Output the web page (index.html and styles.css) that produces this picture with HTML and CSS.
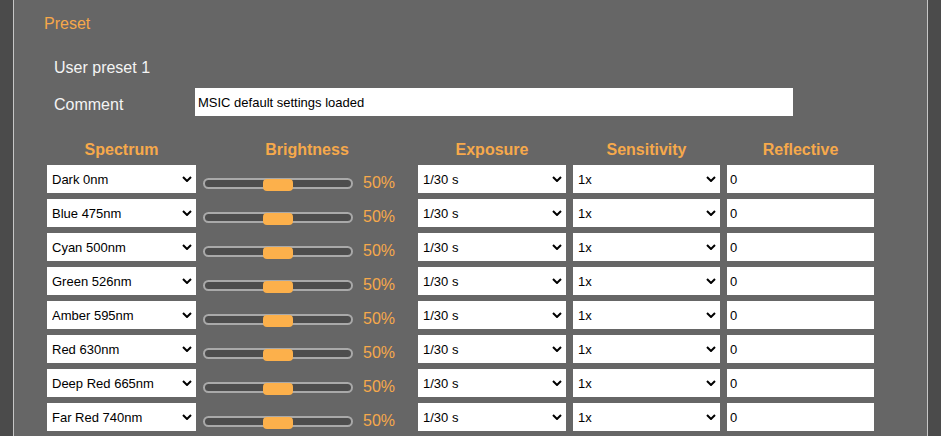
FILE: index.html
```html
<!DOCTYPE html>
<html>
<head>
<meta charset="utf-8">
<link rel="stylesheet" href="styles.css">
</head>
<body>
<div class="panel">
  <h2 class="title">Preset</h2>
  <div class="preset-name">User preset 1</div>
  <div class="comment-row">
    <label class="comment-label">Comment</label>
    <input class="comment-input" type="text" value="MSIC default settings loaded">
  </div>
  <div class="grid">
    <div class="head">Spectrum</div>
    <div class="head">Brightness</div>
    <div class="head">Exposure</div>
    <div class="head">Sensitivity</div>
    <div class="head">Reflective</div>

    <div class="sel"><select><option>Dark 0nm</option></select><svg class="chev" viewBox="0 0 10 6"><polyline points="1,1 5,5 9,1" fill="none" stroke="#000" stroke-width="2"/></svg></div>
    <div class="bright"><div class="slider"><div class="thumb"></div></div><span class="pct">50%</span></div>
    <div class="sel"><select><option>1/30 s</option></select><svg class="chev" viewBox="0 0 10 6"><polyline points="1,1 5,5 9,1" fill="none" stroke="#000" stroke-width="2"/></svg></div>
    <div class="sel"><select><option>1x</option></select><svg class="chev" viewBox="0 0 10 6"><polyline points="1,1 5,5 9,1" fill="none" stroke="#000" stroke-width="2"/></svg></div>
    <input class="num" type="text" value="0">

    <div class="sel"><select><option>Blue 475nm</option></select><svg class="chev" viewBox="0 0 10 6"><polyline points="1,1 5,5 9,1" fill="none" stroke="#000" stroke-width="2"/></svg></div>
    <div class="bright"><div class="slider"><div class="thumb"></div></div><span class="pct">50%</span></div>
    <div class="sel"><select><option>1/30 s</option></select><svg class="chev" viewBox="0 0 10 6"><polyline points="1,1 5,5 9,1" fill="none" stroke="#000" stroke-width="2"/></svg></div>
    <div class="sel"><select><option>1x</option></select><svg class="chev" viewBox="0 0 10 6"><polyline points="1,1 5,5 9,1" fill="none" stroke="#000" stroke-width="2"/></svg></div>
    <input class="num" type="text" value="0">

    <div class="sel"><select><option>Cyan 500nm</option></select><svg class="chev" viewBox="0 0 10 6"><polyline points="1,1 5,5 9,1" fill="none" stroke="#000" stroke-width="2"/></svg></div>
    <div class="bright"><div class="slider"><div class="thumb"></div></div><span class="pct">50%</span></div>
    <div class="sel"><select><option>1/30 s</option></select><svg class="chev" viewBox="0 0 10 6"><polyline points="1,1 5,5 9,1" fill="none" stroke="#000" stroke-width="2"/></svg></div>
    <div class="sel"><select><option>1x</option></select><svg class="chev" viewBox="0 0 10 6"><polyline points="1,1 5,5 9,1" fill="none" stroke="#000" stroke-width="2"/></svg></div>
    <input class="num" type="text" value="0">

    <div class="sel"><select><option>Green 526nm</option></select><svg class="chev" viewBox="0 0 10 6"><polyline points="1,1 5,5 9,1" fill="none" stroke="#000" stroke-width="2"/></svg></div>
    <div class="bright"><div class="slider"><div class="thumb"></div></div><span class="pct">50%</span></div>
    <div class="sel"><select><option>1/30 s</option></select><svg class="chev" viewBox="0 0 10 6"><polyline points="1,1 5,5 9,1" fill="none" stroke="#000" stroke-width="2"/></svg></div>
    <div class="sel"><select><option>1x</option></select><svg class="chev" viewBox="0 0 10 6"><polyline points="1,1 5,5 9,1" fill="none" stroke="#000" stroke-width="2"/></svg></div>
    <input class="num" type="text" value="0">

    <div class="sel"><select><option>Amber 595nm</option></select><svg class="chev" viewBox="0 0 10 6"><polyline points="1,1 5,5 9,1" fill="none" stroke="#000" stroke-width="2"/></svg></div>
    <div class="bright"><div class="slider"><div class="thumb"></div></div><span class="pct">50%</span></div>
    <div class="sel"><select><option>1/30 s</option></select><svg class="chev" viewBox="0 0 10 6"><polyline points="1,1 5,5 9,1" fill="none" stroke="#000" stroke-width="2"/></svg></div>
    <div class="sel"><select><option>1x</option></select><svg class="chev" viewBox="0 0 10 6"><polyline points="1,1 5,5 9,1" fill="none" stroke="#000" stroke-width="2"/></svg></div>
    <input class="num" type="text" value="0">

    <div class="sel"><select><option>Red 630nm</option></select><svg class="chev" viewBox="0 0 10 6"><polyline points="1,1 5,5 9,1" fill="none" stroke="#000" stroke-width="2"/></svg></div>
    <div class="bright"><div class="slider"><div class="thumb"></div></div><span class="pct">50%</span></div>
    <div class="sel"><select><option>1/30 s</option></select><svg class="chev" viewBox="0 0 10 6"><polyline points="1,1 5,5 9,1" fill="none" stroke="#000" stroke-width="2"/></svg></div>
    <div class="sel"><select><option>1x</option></select><svg class="chev" viewBox="0 0 10 6"><polyline points="1,1 5,5 9,1" fill="none" stroke="#000" stroke-width="2"/></svg></div>
    <input class="num" type="text" value="0">

    <div class="sel"><select><option>Deep Red 665nm</option></select><svg class="chev" viewBox="0 0 10 6"><polyline points="1,1 5,5 9,1" fill="none" stroke="#000" stroke-width="2"/></svg></div>
    <div class="bright"><div class="slider"><div class="thumb"></div></div><span class="pct">50%</span></div>
    <div class="sel"><select><option>1/30 s</option></select><svg class="chev" viewBox="0 0 10 6"><polyline points="1,1 5,5 9,1" fill="none" stroke="#000" stroke-width="2"/></svg></div>
    <div class="sel"><select><option>1x</option></select><svg class="chev" viewBox="0 0 10 6"><polyline points="1,1 5,5 9,1" fill="none" stroke="#000" stroke-width="2"/></svg></div>
    <input class="num" type="text" value="0">

    <div class="sel"><select><option>Far Red 740nm</option></select><svg class="chev" viewBox="0 0 10 6"><polyline points="1,1 5,5 9,1" fill="none" stroke="#000" stroke-width="2"/></svg></div>
    <div class="bright"><div class="slider"><div class="thumb"></div></div><span class="pct">50%</span></div>
    <div class="sel"><select><option>1/30 s</option></select><svg class="chev" viewBox="0 0 10 6"><polyline points="1,1 5,5 9,1" fill="none" stroke="#000" stroke-width="2"/></svg></div>
    <div class="sel"><select><option>1x</option></select><svg class="chev" viewBox="0 0 10 6"><polyline points="1,1 5,5 9,1" fill="none" stroke="#000" stroke-width="2"/></svg></div>
    <input class="num" type="text" value="0">
  </div>
</div>
</body>
</html>
```
FILE: styles.css
```css
html, body { margin: 0; padding: 0; }
body {
  background: #4b4b4b;
  font-family: "Liberation Sans", Arial, sans-serif;
  overflow: hidden;
}
.panel {
  margin-left: 13px;
  width: 913px;
  border-left: 1px solid #c6c6c6;
  border-right: 1px solid #c6c6c6;
  background: #666666;
  padding: 14px 0 30px 0;
}
.title {
  margin: 0 0 0 30px;
  font-size: 16px;
  font-weight: normal;
  line-height: 20px;
  color: #f6a84a;
}
.preset-name {
  margin: 24px 0 0 40px;
  font-size: 16px;
  line-height: 20px;
  color: #f4f4f4;
}
.comment-row {
  display: flex;
  align-items: flex-start;
  margin: 10px 0 0 40px;
}
.comment-label {
  width: 141px;
  flex: none;
  margin-top: 7px;
  font-size: 16px;
  line-height: 20px;
  color: #f4f4f4;
}
.comment-input {
  width: 598px;
  height: 28px;
  box-sizing: border-box;
  border: none;
  margin: 0;
  padding: 0 3px;
  font-family: "Liberation Sans", Arial, sans-serif;
  font-size: 13px;
  color: #000;
  background: #fff;
  outline: none;
}
.grid {
  display: grid;
  grid-template-columns: 149px 208px 148px 147px 147px;
  grid-template-rows: 18px;
  grid-auto-rows: 28px;
  column-gap: 7px;
  row-gap: 6px;
  margin: 25px 0 0 33px;
}
.head {
  text-align: center;
  font-size: 16px;
  font-weight: bold;
  line-height: 18px;
  color: #f6a94b;
}
.sel {
  position: relative;
  height: 28px;
}
.sel select {
  appearance: none;
  -webkit-appearance: none;
  display: block;
  width: 100%;
  height: 28px;
  box-sizing: border-box;
  border: none;
  border-radius: 0;
  margin: 0;
  padding: 0 0 0 5px;
  background: #fff;
  color: #000;
  font-family: "Liberation Sans", Arial, sans-serif;
  font-size: 13px;
  outline: none;
}
.chev {
  position: absolute;
  right: 4px;
  top: 11px;
  width: 10px;
  height: 6px;
  pointer-events: none;
}
.bright {
  display: flex;
  align-items: center;
  padding-top: 8px;
  box-sizing: border-box;
  height: 28px;
}
.slider {
  position: relative;
  width: 150px;
  height: 11px;
  box-sizing: border-box;
  border: 2px solid #a9a9a9;
  border-radius: 6px;
  background: #4d4d4d;
  flex: none;
}
.thumb {
  position: absolute;
  left: 58px;
  top: -1px;
  width: 30px;
  height: 12px;
  border-radius: 4px;
  background: #fcb04b;
}
.pct {
  margin-left: 10px;
  font-size: 16px;
  line-height: 20px;
  color: #f6a94b;
}
.num {
  display: block;
  width: 100%;
  height: 28px;
  box-sizing: border-box;
  border: none;
  margin: 0;
  padding: 0 3px;
  background: #fff;
  color: #000;
  font-family: "Liberation Sans", Arial, sans-serif;
  font-size: 13px;
  outline: none;
}
```
